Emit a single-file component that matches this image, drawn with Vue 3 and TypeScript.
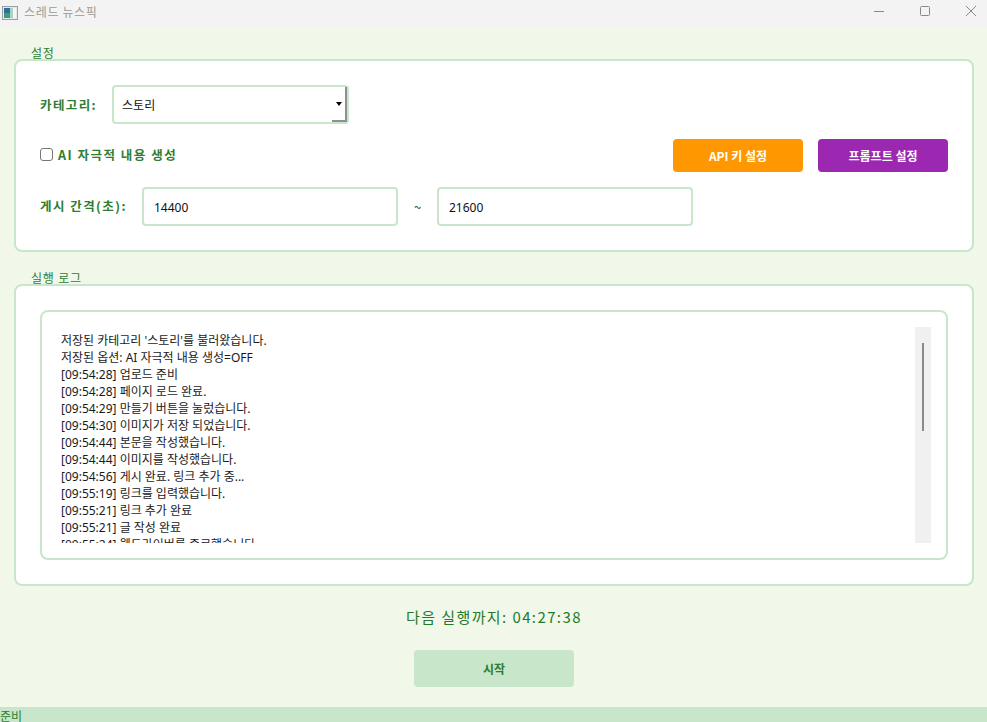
<script setup lang="ts">
const logLines: string[] = [
  "저장된 카테고리 '스토리'를 불러왔습니다.",
  '저장된 옵션: AI 자극적 내용 생성=OFF',
  '[09:54:28] 업로드 준비',
  '[09:54:28] 페이지 로드 완료.',
  '[09:54:29] 만들기 버튼을 눌렀습니다.',
  '[09:54:30] 이미지가 저장 되었습니다.',
  '[09:54:44] 본문을 작성했습니다.',
  '[09:54:44] 이미지를 작성했습니다.',
  '[09:54:56] 게시 완료. 링크 추가 중...',
  '[09:55:19] 링크를 입력했습니다.',
  '[09:55:21] 링크 추가 완료',
  '[09:55:21] 글 작성 완료',
  '[09:55:24] 웹드라이버를 종료했습니다.',
]
</script>

<template>
  <div class="window">
    <header class="titlebar">
      <svg class="app-icon" width="16" height="14" viewBox="0 0 16 14">
        <rect x="0.5" y="0.5" width="15" height="13" fill="#e4e8ea" stroke="#9aa0a6" />
        <rect x="2" y="2" width="6" height="10" fill="#2f6f8f" />
        <rect x="2" y="7" width="6" height="5" fill="#3f9a7a" />
        <rect x="8" y="2" width="3" height="10" fill="#a9d3c4" />
        <rect x="11" y="2" width="3" height="10" fill="#f4f6f7" />
      </svg>
      <span class="title">스레드 뉴스픽</span>
      <div class="controls">
        <svg width="12" height="12" viewBox="0 0 12 12"><path d="M1 6.5H11" stroke="#8a8a8a" /></svg>
        <svg width="12" height="12" viewBox="0 0 12 12"><rect x="1.5" y="1.5" width="9" height="9" rx="1" fill="none" stroke="#8a8a8a" /></svg>
        <svg width="12" height="12" viewBox="0 0 12 12"><path d="M1 1L11 11M11 1L1 11" stroke="#8a8a8a" /></svg>
      </div>
    </header>

    <main class="content">
      <section class="card settings">
        <span class="legend">설정</span>
        <div class="row">
          <label class="label">카테고리:</label>
          <div class="combo">
            <span>스토리</span>
            <div class="combo-btn"><i class="arrow"></i></div>
          </div>
        </div>
        <div class="row">
          <span class="checkbox"></span>
          <span class="label check-label">AI 자극적 내용 생성</span>
          <div class="actions">
            <button class="btn orange">API 키 설정</button>
            <button class="btn purple">프롬프트 설정</button>
          </div>
        </div>
        <div class="row">
          <label class="label interval-label">게시 간격(초):</label>
          <input class="field" value="14400" />
          <span class="tilde">~</span>
          <input class="field" value="21600" />
        </div>
      </section>

      <section class="card logs">
        <span class="legend">실행 로그</span>
        <div class="log-box">
          <div class="log-text">
            <div v-for="line in logLines" :key="line" class="log-line">{{ line }}</div>
          </div>
          <div class="scrollbar"><div class="thumb"></div></div>
        </div>
      </section>

      <div class="timer">다음 실행까지: 04:27:38</div>
      <button class="start">시작</button>
    </main>

    <footer class="status">준비</footer>
  </div>
</template>

<style>
html, body { margin: 0; padding: 0; }
</style>

<style scoped>
.window {
  width: 987px;
  height: 722px;
  display: flex;
  flex-direction: column;
  overflow: hidden;
  background: #f1f8e9;
  font-family: "Noto Sans CJK KR", "Noto Sans", sans-serif;
}
.titlebar {
  height: 27px;
  flex: none;
  display: flex;
  align-items: center;
  background: #f3f3f3;
  padding-left: 2px;
  box-sizing: border-box;
}
.app-icon { margin-right: 6px; margin-top: -1px; }
.title { font-size: 12px; color: #9a9a9a; letter-spacing: 0.65px; margin-top: -5px; }
.controls {
  margin-left: auto;
  display: flex;
  gap: 34px;
  padding-right: 10px;
  margin-top: -5px;
}
.content {
  flex: 1;
  display: flex;
  flex-direction: column;
  align-items: center;
  padding: 32px 13px 0 14px;
  min-height: 0;
}
.card {
  position: relative;
  align-self: stretch;
  background: #fff;
  border: 2px solid #c8e6c9;
  border-radius: 8px;
  box-sizing: border-box;
  padding: 24px;
}
.legend {
  position: absolute;
  left: 15px;
  top: -16px;
  font-size: 12px;
  line-height: 16px;
  color: #2e7d32;
  letter-spacing: 0.8px;
}
.settings { height: 193px; display: flex; flex-direction: column; gap: 15px; }
.row { display: flex; align-items: center; gap: 15px; }
.label { font-size: 12.5px; font-weight: 700; color: #2e7d32; letter-spacing: 1.4px; white-space: nowrap; }
.interval-label { margin-top: -2px; width: 87px; letter-spacing: 1.45px; }
.combo {
  width: 237px;
  height: 39px;
  box-sizing: border-box;
  border: 2px solid #c8e6c9;
  border-radius: 4px;
  display: flex;
  align-items: center;
  justify-content: space-between;
  padding-left: 8px;
  font-size: 12px;
  color: #111;
}
.combo-btn {
  width: 15px;
  height: 35px;
  box-sizing: border-box;
  border-right: 2px solid #8f8f8f;
  border-bottom: 2px solid #8f8f8f;
  display: flex;
  align-items: center;
  justify-content: flex-end;
  padding-right: 3px;
}
.arrow {
  width: 0;
  height: 0;
  border-left: 3.5px solid transparent;
  border-right: 3.5px solid transparent;
  border-top: 4px solid #000;
}
.checkbox {
  width: 11px;
  height: 11px;
  border: 1px solid #767676;
  border-radius: 3px;
  background: #fff;
  margin-right: -10px;
  margin-top: -2px;
}
.check-label { font-size: 12.5px; letter-spacing: 1.5px; margin-top: -3px; }
.actions { margin-left: auto; display: flex; gap: 15px; }
.btn {
  width: 130px;
  height: 33px;
  border: 0;
  border-radius: 4px;
  color: #fff;
  font: 700 12px "Noto Sans CJK KR", "Noto Sans", sans-serif;
  padding: 0;
}
.orange { background: #ff9800; }
.purple { background: #9c27b0; }
.field {
  width: 256px;
  height: 39px;
  box-sizing: border-box;
  border: 2px solid #c8e6c9;
  border-radius: 4px;
  padding: 1px 10px 0;
  font: 12px "Noto Sans", "Noto Sans CJK KR", sans-serif;
  color: #111;
  outline: none;
}
.tilde { width: 9px; font-size: 13px; color: #1f5f26; text-align: center; }
.logs { height: 302px; margin-top: 32px; }
.log-box {
  height: 250px;
  box-sizing: border-box;
  border: 2px solid #c8e6c9;
  border-radius: 8px;
  padding: 15px;
  display: flex;
}
.log-text {
  flex: 1;
  min-width: 0;
  overflow: hidden;
  padding: 5px 0 0 4px;
  font-family: "Noto Sans", "Noto Sans CJK KR", sans-serif;
  font-size: 12px;
  line-height: 17px;
  color: #1a1a1a;
}
.log-line { height: 17px; white-space: nowrap; }
.scrollbar {
  width: 16px;
  background: #f0f0f0;
  display: flex;
  justify-content: center;
  flex: none;
  padding-top: 16px;
  box-sizing: border-box;
}
.thumb { width: 2px; height: 88px; background: #8a8a8a; }
.timer {
  margin-top: 21px;
  height: 20px;
  font-size: 15px;
  line-height: 20px;
  letter-spacing: 1.4px;
  color: #1f7a2a;
  white-space: nowrap;
}
.start {
  margin-top: 23px;
  width: 160px;
  height: 37px;
  border: 0;
  border-radius: 4px;
  background: #c8e6c9;
  color: #2e7d32;
  font: 700 12px "Noto Sans CJK KR", "Noto Sans", sans-serif;
  padding: 0;
}
.status {
  height: 15px;
  flex: none;
  overflow: hidden;
  background: #c8e6c9;
  color: #2e7d32;
  font-size: 12px;
  line-height: 17px;
}
</style>
